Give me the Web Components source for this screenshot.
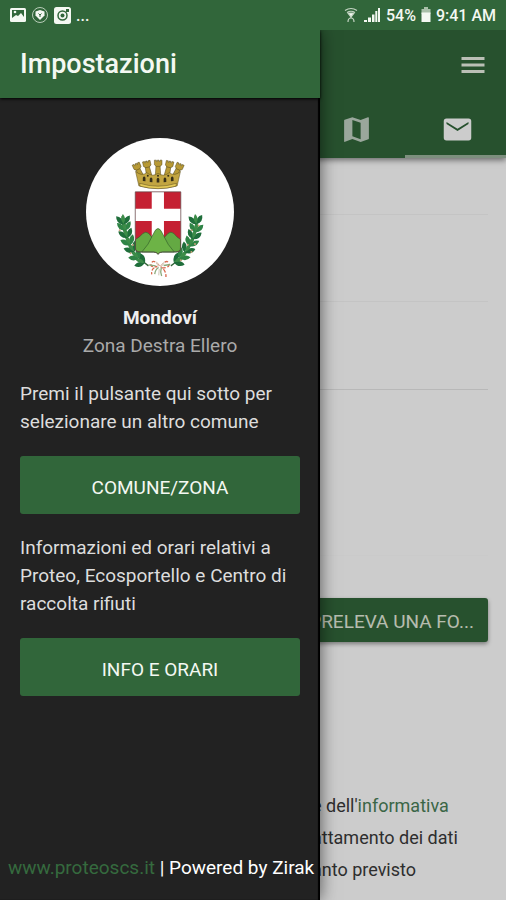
<!DOCTYPE html>
<html lang="it">
<head>
<meta charset="utf-8">
<meta name="viewport" content="width=device-width, initial-scale=1">
<title>Impostazioni</title>
<style>
  body {
    margin: 0;
    font-family: Roboto, sans-serif;
    --green: #31663a;
    --dark: #222;
  }
</style>
</head>
<body>
<app-shell>
  <status-bar slot="status"></status-bar>
  <report-page></report-page>
  <settings-drawer slot="drawer" heading="Impostazioni">
    <town-badge slot="town" name="Mondoví" zone="Zona Destra Ellero"></town-badge>
    <drawer-section action="COMUNE/ZONA">Premi il pulsante qui sotto per selezionare un altro comune</drawer-section>
    <drawer-section action="INFO E ORARI">Informazioni ed orari relativi a Proteo, Ecosportello e Centro di raccolta rifiuti</drawer-section>
  </settings-drawer>
</app-shell>

<script>
class AppShell extends HTMLElement {
  constructor() {
    super();
    this.attachShadow({ mode: 'open' });
    this.shadowRoot.innerHTML = `
      <style>
        :host {
          display: flex;
          flex-direction: column;
          min-height: 100vh;
        }
        .stage {
          position: relative;
          flex: 1;
          display: flex;
          overflow: hidden;
        }
        .backdrop {
          position: absolute;
          inset: 0;
          background: rgba(0, 0, 0, 0.2);
        }
      </style>
      <slot name="status"></slot>
      <div class="stage">
        <slot></slot>
        <div class="backdrop"></div>
        <slot name="drawer"></slot>
      </div>
    `;
  }
}

class StatusBar extends HTMLElement {
  constructor() {
    super();
    this.attachShadow({ mode: 'open' });
    this.shadowRoot.innerHTML = `
      <style>
        :host {
          display: flex;
          align-items: center;
          justify-content: space-between;
          box-sizing: border-box;
          height: 30px;
          padding: 0 10px;
          background: var(--green);
          color: #f4f8f2;
          font-size: 16px;
          font-weight: 500;
        }
        .group {
          display: flex;
          align-items: center;
          gap: 5px;
        }
        svg { display: block; }
      </style>
      <div class="group">
        <svg width="16" height="16" viewBox="0 0 16 16">
          <rect x="0" y="1" width="16" height="14" rx="1.5" fill="#f4f8f2"/>
          <path d="M2 3h12v7l-3-4-3 3-2-1-4 3z" fill="#31663a"/>
          <circle cx="5" cy="5" r="1.3" fill="#f4f8f2"/>
        </svg>
        <svg width="18" height="18" viewBox="1 0 18 18">
          <circle cx="10" cy="9" r="7.5" fill="none" stroke="#b9cdb9" stroke-width="1"/>
          <path d="M5.500 5.500 10 4l4.500 1.500v4L10 14 5.500 9.500z" fill="#f4f8f2"/>
          <path d="M8.500 7.500 10 9l1.500-1.500M10 9v2" fill="none" stroke="#31663a"/>
        </svg>
        <svg width="17" height="17" viewBox="0 0 17 17">
          <rect width="17" height="17" rx="2.500" fill="#f4f8f2"/>
          <rect x="12" y="2" width="3" height="3" fill="#31663a"/>
          <circle cx="8.500" cy="8.500" r="4.500" fill="none" stroke="#31663a" stroke-width="1.500"/>
          <circle cx="8.500" cy="8.500" r="2" fill="#31663a"/>
        </svg>
        <span>...</span>
      </div>
      <div class="group">
        <svg width="14" height="16" viewBox="0 0 14 16" fill="none" stroke="#c5d5c4" stroke-width="1.200">
          <path d="M1 3.500Q7-.5 13 3.500M3 5.500Q7 3 11 5.500"/>
          <path d="M4 6h6L7 10z" fill="#f4f8f2"/>
          <path d="M7 9v2M4 15q0-4 3-4t3 4"/>
        </svg>
        <svg width="18" height="16" viewBox="0 0 18 16" fill="#f4f8f2">
          <path d="M1 13h3v2H1zM5 10.500h3V15H5zM9 7.500h2.500V15H9zM12.300 4h2v11h-2zM15 1h2v14h-2z"/>
        </svg>
        <span>54%</span>
        <svg width="10" height="16" viewBox="0 0 10 16">
          <path d="M3 0h4v2h2.500v5h-9V2H3z" fill="#a9bfa9"/>
          <path d="M.5 5.500h9V15h-9z" fill="#f4f8f2"/>
        </svg>
        <span>9:41 AM</span>
      </div>
    `;
  }
}

class TabStrip extends HTMLElement {
  constructor() {
    super();
    this.attachShadow({ mode: 'open' });
    const tabs = [
      ['Calendario', 'M19 3h-1V1h-2v2H8V1H6v2H3v18h18V3zm0 16H5V8h14z'],
      ['Rifiuti', 'M6 19a2 2 0 0 0 2 2h8a2 2 0 0 0 2-2V7H6zM19 4h-3.500l-1-1h-5l-1 1H5v2h14z'],
      ['Notizie', 'M3 5h18v2H3zm0 6h18v2H3zm0 6h18v2H3z'],
      ['Mappa', 'M20.500 3l-.16.03L15 5.100 9 3 3.360 4.900a.5.5 0 0 0-.36.480V20.500a.5.5 0 0 0 .66.470L9 18.900l6 2.100 5.640-1.900a.5.5 0 0 0 .36-.480V3.500a.5.5 0 0 0-.5-.5zM15 19l-6-2.110V5l6 2.110z'],
      ['Segnalazioni', 'M20 4H4a2 2 0 0 0-2 2v12a2 2 0 0 0 2 2h16a2 2 0 0 0 2-2V6a2 2 0 0 0-2-2zm0 4l-8 5-8-5V6.500l8 5 8-5z']
    ];
    this.shadowRoot.innerHTML = `
      <style>
        :host { display: flex; }
        button {
          flex: 1;
          display: flex;
          align-items: center;
          justify-content: center;
          height: 59px;
          padding: 4px 0 0 4px;
          border: 0;
          border-bottom: 3px solid transparent;
          background: none;
          color: #fff;
        }
        svg { width: 33px; height: 33px; fill: currentColor; opacity: 0.7; }
        button[aria-selected="true"] { border-color: #9db39e; }
        button[aria-selected="true"] svg { opacity: 1; }
      </style>
      ${tabs.map(([label, d], i) => `
        <button role="tab" aria-label="${label}" aria-selected="${i === tabs.length - 1}">
          <svg viewBox="0 0 24 24"><path d="${d}"/></svg>
        </button>`).join('')}
    `;
  }
}

class ReportPage extends HTMLElement {
  constructor() {
    super();
    this.attachShadow({ mode: 'open' });
    this.shadowRoot.innerHTML = `
      <style>
        :host {
          flex: 1;
          min-width: 0;
          background: #fff;
          font-size: 18px;
        }
        header {
          background: var(--green);
          box-shadow: 0 2px 6px rgba(0, 0, 0, 0.5);
        }
        .toolbar {
          display: flex;
          align-items: center;
          justify-content: flex-end;
          height: 69px;
          padding: 0 18px;
        }
        .menu {
          display: flex;
          padding: 0;
          border: 0;
          background: none;
        }
        main { padding: 0 18px; }
        .row {
          box-sizing: border-box;
          height: 87px;
          border-bottom: 1px solid #f5f5f5;
        }
        .row.short { height: 57px; }
        .row.last { height: 88px; border-color: #e6e6e6; }
        .row.tall { height: 166px; border-color: #fdfdfd; }
        .actions {
          display: grid;
          grid-template-columns: 1fr 1fr;
          gap: 10px;
          padding-top: 42px;
        }
        .photo {
          grid-column: 2;
          display: flex;
          align-items: center;
          justify-content: flex-end;
          gap: 10px;
          min-width: 0;
          height: 44px;
          padding: 2px 14px 0;
          border: 0;
          border-radius: 3px;
          background: var(--green);
          box-shadow: 0 2px 4px rgba(0, 0, 0, 0.4);
          color: #e4ebdc;
          font: 19px Roboto, sans-serif;
          white-space: nowrap;
        }
        .consent {
          margin: 148px 0 0;
          padding-left: 294px;
          line-height: 32px;
          color: #3a3a3a;
          white-space: nowrap;
        }
        a { color: #4a8058; text-decoration: none; }
      </style>
      <header>
        <div class="toolbar">
          <button class="menu" aria-label="Menu">
            <svg width="30" height="30" viewBox="0 0 30 30" fill="#eaf0e4">
              <path d="M3.500 7h23v3h-23zM3.500 13.500h23v3h-23zM3.500 20h23v3h-23z"/>
            </svg>
          </button>
        </div>
        <tab-strip role="tablist"></tab-strip>
      </header>
      <main>
        <div class="row short"></div>
        <div class="row"></div>
        <div class="row last"></div>
        <div class="row tall"></div>
        <div class="actions">
          <button class="photo">PRELEVA UNA FO...</button>
        </div>
        <p class="consent">
          e dell'<a href="#informativa">informativa</a><br>
          attamento dei dati<br>
          anto previsto
        </p>
      </main>
    `;
  }
}

class SettingsDrawer extends HTMLElement {
  constructor() {
    super();
    this.attachShadow({ mode: 'open' });
  }

  connectedCallback() {
    this.shadowRoot.innerHTML = `
      <style>
        :host {
          position: absolute;
          inset: 0 auto 0 0;
          display: flex;
          flex-direction: column;
          box-sizing: border-box;
          width: 320px;
          background: var(--dark);
          box-shadow: inset -2px 0 1px #000, 0 0 16px rgba(0, 0, 0, 0.6);
          font-size: 19px;
          line-height: 28px;
        }
        header {
          display: flex;
          align-items: center;
          height: 68px;
          padding: 0 20px;
          background: var(--green);
          box-shadow: 0 1px 3px #000;
        }
        h1 {
          margin: 0;
          color: #f4f8f2;
          font-size: 27px;
          font-weight: 500;
        }
        .content {
          display: flex;
          flex-direction: column;
          gap: 20px;
          padding: 40px 20px 20px;
        }
        footer {
          margin-top: auto;
          padding: 0 8px 18px;
          color: #fff;
          white-space: nowrap;
        }
        a { color: #356a3e; text-decoration: none; }
      </style>
      <header><h1>${this.getAttribute('heading')}</h1></header>
      <div class="content">
        <slot name="town"></slot>
        <slot></slot>
      </div>
      <footer><a href="#proteo">www.proteoscs.it</a> | Powered by Zirak</footer>
    `;
  }
}

class TownBadge extends HTMLElement {
  constructor() {
    super();
    this.attachShadow({ mode: 'open' });
  }

  // Laurel branch: pairs of leaves set along a list of stem points
  leaves(points) {
    return points.map(([x, y, turn], i) => `
      <g transform="translate(${x} ${y}) rotate(${turn}) scale(1.150)" fill="${i % 2 ? '#2f8446' : '#1f6e3b'}">
        <path d="M0 6Q-20 2-18-17Q-1-15 0 6zM0 6Q20 2 18-17Q1-15 0 6z"/>
        <path d="M0 4Q-10-10 0-22Q10-10 0 4z" fill="#3c8c48"/>
      </g>`).join('');
  }

  connectedCallback() {
    const left = [[190, 396, -68], [174, 380, -50], [160, 360, -35], [149, 339, -24], [141, 317, -16], [135, 295, -8], [131, 276, -3]];
    const right = [[290, 394, 65], [306, 380, 48], [321, 362, 33], [334, 342, 23], [343, 321, 15], [350, 300, 8], [351, 276, -6]];
    const spikes = [[172, 108, -24], [202, 101, -12], [236, 98, 0], [270, 101, 12], [300, 108, 24]];
    this.shadowRoot.innerHTML = `
      <style>
        :host { display: block; text-align: center; }
        svg {
          display: block;
          width: 148px;
          height: 148px;
          margin: 0 auto 18px;
          border-radius: 50%;
          background: #fff;
        }
        strong { display: block; color: #eee; font-weight: 700; }
        span { color: #aaa; }
      </style>
      <svg viewBox="18 21 448 448" role="img" aria-label="Stemma">
        <g stroke="#54481d" stroke-width="1.500">
          ${spikes.map(([x, y, turn]) => `
            <g transform="translate(${x} ${y}) rotate(${turn})" fill="#b89a35">
              <path d="M-6 4h12l3 44H-9z"/>
              <path d="M-11-10h6v4h3v-4h5v4h3v-4h6V4l-6 5H-5l-6-5z"/>
            </g>`).join('')}
          <path d="M168 122q18 16 34 4 17 14 34 2 17 12 34-2 17 12 34-4l-10 44q-58 16-116 0z" fill="#c2a541"/>
          <path d="M180 158q56 18 112 0l-2 9q-54 15-108 0z" fill="#e6cb58"/>
        </g>
        <g fill="#342d17">
          <path d="M190 151v-10q4-7 8 0v11zM211 154v-10q4-7 8 0v11zM232 156v-11q4-7 8 0v11zM253 155v-11q4-7 8 0v10zM275 152v-11q4-7 8 0v10z"/>
          <circle cx="205" cy="135" r="3"/><circle cx="236" cy="135" r="3"/><circle cx="267" cy="135" r="3"/>
        </g>
        <g fill="none" stroke="#33653a" stroke-width="4">
          <path d="M127 258q2 95 80 150M349 259q12 90-74 149"/>
        </g>
        ${this.leaves(left)}
        ${this.leaves(right)}
        <g fill="#c9a17a">
          <circle cx="120" cy="300" r="3"/><circle cx="160" cy="345" r="3"/><circle cx="153" cy="370" r="3"/>
          <circle cx="338" cy="300" r="3"/><circle cx="359" cy="286" r="3"/><circle cx="348" cy="342" r="3"/>
          <circle cx="326" cy="344" r="3"/><circle cx="305" cy="391" r="3"/><circle cx="337" cy="366" r="3"/>
        </g>
        <path d="M167 184h138v170q0 12-13 12h-42q-10 0-14 7-4-7-14-7h-42q-13 0-13-12z" fill="#c52032"/>
        <path d="M217 184h37v51h51v37h-51v70h-37v-70h-50v-37h50z" fill="#fff"/>
        <g fill="#64a943" stroke="#335f2c" stroke-width="2">
          <path d="M168 328q13-7 22-18 9-8 18 0l20 24v32h-46q-14-1-14-12z"/>
          <path d="M304 328q-12-7-20-18-9-8-18 0l-22 24v32h46q14-1 14-12z"/>
          <path d="M187 366q20-20 35-55 14-32 28 0 16 36 35 55h-35q-10 0-14 7-4-7-14-7z" fill="#6db346"/>
        </g>
        <path d="M167 184h138v170q0 12-13 12h-42q-10 0-14 7-4-7-14-7h-42q-13 0-13-12z" fill="none" stroke="#574c4c" stroke-width="2"/>
        <g fill="none" stroke-width="4">
          <path d="M240 408q-17-22-24-8t18 10q-20 5-17 24M244 410q18-24 24-10t-20 14q13 10 12 28" stroke="#d9694e" stroke-dasharray="12 5"/>
          <path d="M238 413q-10 5-12 20M246 413q-4 13 1 26M207 405l22 3M253 407l20-3" stroke="#8aaa7b"/>
          <path d="M230 396q5 7 8 13M255 397l-10 12M240 417l-2 20" stroke="#d9d5c8"/>
        </g>
      </svg>
      <strong>${this.getAttribute('name')}</strong>
      <span>${this.getAttribute('zone')}</span>
    `;
  }
}

class DrawerSection extends HTMLElement {
  constructor() {
    super();
    this.attachShadow({ mode: 'open' });
  }

  connectedCallback() {
    this.shadowRoot.innerHTML = `
      <style>
        :host {
          display: flex;
          flex-direction: column;
          gap: 20px;
          color: #ddd;
        }
        p { margin: 0; }
        button {
          height: 58px;
          padding: 4px 16px 0;
          border: 0;
          border-radius: 3px;
          background: var(--green);
          color: #f4f8f2;
          font: 19px Roboto, sans-serif;
        }
      </style>
      <p><slot></slot></p>
      <button>${this.getAttribute('action')}</button>
    `;
  }
}

customElements.define('app-shell', AppShell);
customElements.define('status-bar', StatusBar);
customElements.define('tab-strip', TabStrip);
customElements.define('report-page', ReportPage);
customElements.define('settings-drawer', SettingsDrawer);
customElements.define('town-badge', TownBadge);
customElements.define('drawer-section', DrawerSection);
</script>
</body>
</html>
